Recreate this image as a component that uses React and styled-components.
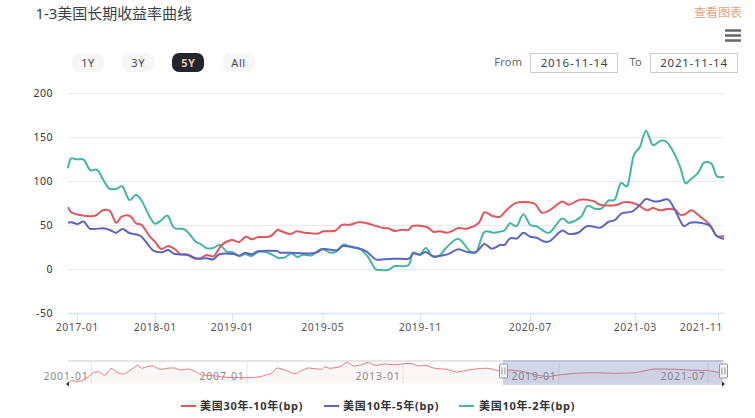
import React from "react";
import styled, { createGlobalStyle } from "styled-components";

const FONT = `"Noto Sans", "Noto Sans CJK SC", "DejaVu Sans", sans-serif`;

const Global = createGlobalStyle`
  html, body { margin: 0; padding: 0; background: #fff; }
  body { font-family: ${FONT}; overflow: hidden; }
`;

const Page = styled.div`
  width: 755px;
  height: 418px;
  display: flex;
  flex-direction: column;
  overflow: hidden;
`;
const Header = styled.header`
  height: 29px;
  display: flex;
  justify-content: space-between;
  align-items: flex-start;
  padding: 3px 13px 0 35.5px;
  box-sizing: border-box;
`;
const Title = styled.h1`
  margin: 0;
  font-size: 15px;
  line-height: 20px;
  font-weight: 400;
  letter-spacing: -0.05px;
  color: #3a3f4a;
`;
const ChartLink = styled.a`
  font-size: 12px;
  line-height: 16px;
  margin-top: 2px;
  color: #e3a37c;
`;
const MenuRow = styled.div`
  height: 13px;
  display: flex;
  justify-content: flex-end;
  padding-right: 14px;
`;
const Controls = styled.div`
  height: 20px;
  margin-top: 11px;
  display: flex;
  align-items: center;
  justify-content: space-between;
  padding: 0 17px 0 72px;
`;
const Ranges = styled.div`
  display: flex;
  gap: 18.2px;
  align-items: flex-start;
  height: 20px;
`;
const RangeButton = styled.button`
  width: 32px;
  height: 19px;
  padding: 0;
  border: 0;
  border-radius: 7px;
  font: ${(p) => (p.$active ? 700 : 400)} 11px/19px ${FONT};
  letter-spacing: 0.6px;
  color: ${(p) => (p.$active ? "#e3c4a8" : "#3e4450")};
  background: ${(p) => (p.$active ? "#24242e" : "#f7f7f7")};
`;
const Dates = styled.div`
  display: flex;
  align-items: center;
`;
const DateLabel = styled.span`
  font-size: 11px;
  line-height: 18px;
  letter-spacing: 0.3px;
  color: #666;
  margin: -2px 8px 0 11px;
`;
const DateBox = styled.div`
  width: 88px;
  height: 20px;
  box-sizing: border-box;
  border: 1px solid #ccc;
  text-align: center;
  font-size: 11.5px;
  line-height: 17px;
  letter-spacing: 0.75px;
  color: #3b3f4c;
`;
const ChartSvg = styled.svg`
  display: block;
  width: 755px;
  height: 352px;
  flex: none;
  margin-top: -7px;
`;
const Axis = styled.text`
  font-family: ${FONT};
  font-size: 10.5px;
  letter-spacing: 0.5px;
  fill: ${(p) => p.$fill || "#555"};
`;
const NavLabel = styled.text`
  font-family: ${FONT};
  font-size: 10.5px;
  letter-spacing: 0.8px;
  fill: #8b8b8b;
`;
const LegendText = styled.text`
  font-family: ${FONT};
  font-size: 11px;
  font-weight: 700;
  letter-spacing: 0.7px;
  fill: #333;
`;

/* chart svg origin in page coords */
const OY = 66;

const z5 = (a) => a.map(([x, y]) => [50 + x / 3, 130 + y / 3]);
const z6 = (a) => a.map(([x, y]) => [280 + x / 3, 170 + y / 3]);
const z7 = (a) => a.map(([x, y]) => [500 + x / 3, 120 + y / 3]);

const teal = [
  ...z5([[54,115],[62,86],[80,88],[102,90],[120,120],[142,120],[160,150],[178,176],[200,176],[218,170],[238,210],[258,194],[275,212],[300,262],[315,281],[335,270],[353,257],[372,293],[400,297],[415,308],[437,335],[452,342],[470,355],[490,354],[510,345],[530,365],[548,367],[568,378],[585,372],[605,378],[625,365],[650,367],[683,383]]),
  ...z6([[0,264],[15,262],[35,250],[52,261],[70,254],[95,256],[125,237],[150,248],[170,244],[190,224],[215,232],[240,237],[265,262],[285,296],[300,300],[325,300],[345,288],[385,286],[398,248],[420,254],[438,234],[458,260],[480,255],[500,232],[535,206],[570,244],[590,244],[612,187],[640,188]]),
  ...z7([[0,335],[15,330],[30,310],[50,318],[70,283],[90,314],[110,319],[130,332],[150,337],[185,296],[205,308],[225,302],[245,288],[262,258],[285,266],[305,265],[325,242],[345,238],[362,190],[383,196],[400,110],[420,80],[438,32],[458,75],[482,62],[500,66],[520,95],[540,140],[555,188],[570,180],[595,157],[612,128],[635,132],[650,168],[672,171]]),
];
const red = [
  ...z5([[54,232],[65,248],[90,255],[122,259],[140,255],[158,241],[180,243],[198,278],[215,260],[240,258],[258,280],[275,285],[300,320],[315,335],[333,357],[355,348],[375,358],[392,373],[410,373],[430,384],[450,385],[470,375],[492,378],[515,345],[545,330],[567,336],[587,320],[605,328],[625,321],[650,321],[665,316],[683,299]]),
  ...z6([[0,182],[30,192],[50,184],[75,188],[110,191],[130,184],[165,182],[185,165],[210,164],[235,157],[255,158],[285,167],[310,174],[325,175],[345,183],[365,179],[385,180],[400,167],[440,171],[460,185],[480,184],[500,188],[515,184],[535,174],[560,176],[595,160],[613,127],[635,137]]),
  ...z7([[0,290],[20,270],[45,250],[75,246],[105,252],[125,278],[150,270],[185,245],[207,254],[240,239],[280,243],[300,254],[345,256],[370,247],[390,247],[415,255],[440,271],[458,264],[480,271],[500,267],[525,269],[540,284],[555,283],[575,271],[595,285],[630,315],[650,348],[672,348]]),
];
const blue = [
  ...z5([[54,278],[65,277],[82,282],[102,275],[120,296],[160,295],[180,300],[198,308],[218,297],[238,309],[270,317],[290,338],[310,362],[335,367],[355,360],[375,372],[415,375],[440,386],[470,385],[490,388],[510,372],[550,372],[568,377],[585,368],[605,373],[625,364],[680,363]]),
  ...z6([[0,248],[30,248],[100,250],[130,237],[170,241],[190,228],[235,235],[260,245],[285,267],[300,269],[340,266],[385,266],[400,250],[420,254],[438,246],[460,259],[490,256],[510,250],[535,238],[565,247],[590,245],[613,222],[635,236]]),
  ...z7([[0,375],[15,374],[30,355],[52,355],[70,338],[90,350],[110,353],[130,364],[150,363],[185,332],[205,341],[235,338],[262,318],[300,323],[325,306],[345,300],[365,280],[395,275],[420,255],[438,237],[460,244],[480,243],[505,239],[525,270],[550,317],[570,308],[600,308],[630,318],[650,348],[672,357]]),
];
const nav = [
  ...[[205,128],[215,122],[240,124],[262,112],[280,98],[298,96],[315,106],[333,85],[350,97],[372,102],[395,88],[413,76],[425,85],[440,80],[460,78],[480,88],[500,85],[525,84],[540,90],[565,87],[585,94],[605,105],[640,107],[680,112],[750,113],[780,110],[800,104],[815,100],[832,84],[860,92],[885,101],[905,92],[925,84],[965,88],[975,80],[990,85],[1020,80],[1042,67],[1060,78],[1085,74],[1105,67]].map(([x, y]) => [x / 3, 340 + y / 3]),
  ...[[0,76],[30,72],[60,74],[105,70],[130,78],[150,76],[180,85],[215,88],[245,96],[280,90],[310,86],[340,85],[372,92],[400,90],[440,94],[480,104],[520,110],[550,105],[600,100],[660,98],[720,100],[780,98],[810,92],[840,87],[900,88],[960,91],[1000,92],[1035,98]].map(([x, y]) => [375 + x / 3, 340 + y / 3]),
];

function smooth(pts, k = 0.16) {
  const p = pts.map(([x, y]) => [x, y - OY]);
  let d = `M${p[0][0].toFixed(1)} ${p[0][1].toFixed(1)}`;
  for (let i = 0; i < p.length - 1; i++) {
    const a = p[Math.max(i - 1, 0)], b = p[i], c = p[i + 1], e = p[Math.min(i + 2, p.length - 1)];
    d += `C${(b[0] + (c[0] - a[0]) * k).toFixed(1)} ${(b[1] + (c[1] - a[1]) * k).toFixed(1)} ${(c[0] - (e[0] - b[0]) * k).toFixed(1)} ${(c[1] - (e[1] - b[1]) * k).toFixed(1)} ${c[0].toFixed(1)} ${c[1].toFixed(1)}`;
  }
  return d;
}

const gridY = [[93, "200"], [137, "150"], [181, "100"], [225, "50"], [269, "0"], [313, "-50"]];
const ticks = [[77, "2017-01", 77.3], [155, "2018-01", 155.3], [232, "2019-01", 232.3], [322.5, "2019-05", 322.7], [420, "2019-11", 420.3], [530, "2020-07", 530.3], [635, "2021-03", 635.3], [718, "2021-11", 701.3]];
const navTicks = [[91.5, "2001-01", 66], [247, "2007-01", 222], [403, "2013-01", 378], [559, "2019-01", 534], [708, "2021-07", 683]];
const legend = [
  ["#e2575e", 181, 200, "美国30年-10年(bp)"],
  ["#5b66c0", 324, 343, "美国10年-5年(bp)"],
  ["#45b5a5", 459, 479, "美国10年-2年(bp)"],
];

const Handle = ({ x }) => (
  <g transform={`translate(${x} ${364 - OY})`}>
    <rect x="-4" y="0" width="8" height="14" rx="1" fill="#f2f2f2" stroke="#999" />
    <path d="M-1.5 3.5V10.5M1.5 3.5V10.5" stroke="#999" />
  </g>
);

export default function App() {
  const navArea = smooth(nav) + `L724 ${383 - OY}L68 ${383 - OY}Z`;
  return (
    <Page>
      <Global />
      <Header>
        <Title>1-3美国长期收益率曲线</Title>
        <ChartLink>查看图表</ChartLink>
      </Header>
      <MenuRow>
        <svg width="16" height="13" viewBox="0 0 16 13">
          <path d="M0 1.5H16M0 6.5H16M0 11.5H16" stroke="#666" strokeWidth="2.6" />
        </svg>
      </MenuRow>
      <Controls>
        <Ranges>
          <RangeButton>1Y</RangeButton>
          <RangeButton>3Y</RangeButton>
          <RangeButton $active>5Y</RangeButton>
          <RangeButton>All</RangeButton>
        </Ranges>
        <Dates>
          <DateLabel>From</DateLabel>
          <DateBox>2016-11-14</DateBox>
          <DateLabel>To</DateLabel>
          <DateBox>2021-11-14</DateBox>
        </Dates>
      </Controls>
      <ChartSvg viewBox="0 0 755 352">
        {gridY.map(([y, l]) => (
          <g key={l}>
            {y !== 313 && <line x1="68" x2="724" y1={y - OY + 0.5} y2={y - OY + 0.5} stroke="#e9e9e9" />}
            <Axis x="53" y={y - OY + 4} textAnchor="end" $fill="#333">{l}</Axis>
          </g>
        ))}
        <line x1="68" x2="724" y1={313.5 - OY} y2={313.5 - OY} stroke="#dde2f1" strokeWidth="1.4" />
        {ticks.map(([x, l, tx]) => (
          <g key={l}>
            <line x1={x + 0.5} x2={x + 0.5} y1={313 - OY} y2={322 - OY} stroke="#dde2f1" />
            <Axis x={tx} y={331 - OY} textAnchor="middle">{l}</Axis>
          </g>
        ))}
        <path d={smooth(teal)} fill="none" stroke="#45b5a5" strokeWidth="2" />
        <path d={smooth(red)} fill="none" stroke="#e2575e" strokeWidth="2" />
        <path d={smooth(blue)} fill="none" stroke="#5b66c0" strokeWidth="2" />

        <line x1="68" x2="724" y1={361 - OY} y2={361 - OY} stroke="#e6e6e6" strokeWidth="2" />
        <path d={navArea} fill="#fdf6f6" />
        {navTicks.map(([x, l, tx]) => (
          <g key={l}>
            <line x1={x} x2={x} y1={361 - OY} y2={384 - OY} stroke="#e6e6e6" />
            <NavLabel x={tx} y={380 - OY} textAnchor="middle">{l}</NavLabel>
          </g>
        ))}
        <path d={smooth(nav, 0.1)} fill="none" stroke="#e4797e" strokeWidth="1" />
        <rect x="503" y={360 - OY} width="220" height="25" fill="#667ab3" fillOpacity="0.3" />
        <Handle x={503.5} />
        <Handle x={723.5} />
        <path d={`M66 ${384 - OY}L69 ${381.5 - OY}V${386.5 - OY}Z`} fill="#333" />
        <path d={`M725 ${384 - OY}L722 ${381.5 - OY}V${386.5 - OY}Z`} fill="#333" />

        {legend.map(([c, lx, tx, l]) => (
          <g key={l}>
            <line x1={lx} x2={lx + 15} y1={406 - OY} y2={406 - OY} stroke={c} strokeWidth="2" />
            <LegendText x={tx} y={410 - OY}>{l}</LegendText>
          </g>
        ))}
      </ChartSvg>
    </Page>
  );
}
